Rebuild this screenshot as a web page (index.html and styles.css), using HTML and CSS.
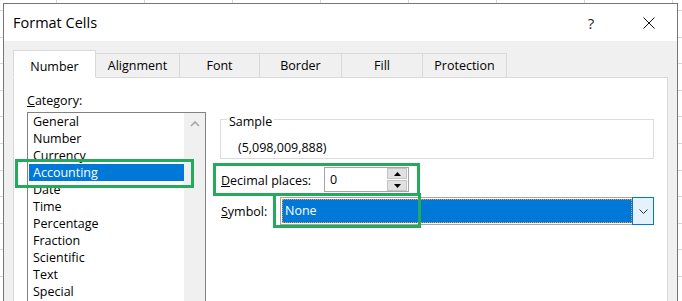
FILE: index.html
```html
<!DOCTYPE html>
<html>
	<head>
		<meta charset="UTF-8">
		<title>Format Cells</title>
		<link rel="stylesheet" href="styles.css">
	</head>
	<body>
		<div class="dialog">
			<div class="titlebar">
				<span class="title">Format Cells</span>
				<span class="help">?</span>
				<span class="close">
					<svg width="12" height="12" viewBox="0 0 12 12"><path d="M0.5 0.5L11.5 11.5M11.5 0.5L0.5 11.5" stroke="#111" stroke-width="1" fill="none"/></svg>
				</span>
			</div>
			<div class="frame">
				<ul class="tabs">
					<li class="tab active w83">Number</li>
					<li class="tab w85">Alignment</li>
					<li class="tab w81">Font</li>
					<li class="tab w83">Border</li>
					<li class="tab w82">Fill</li>
					<li class="tab w85">Protection</li>
				</ul>
				<div class="panel">
					<div class="category">
						<div class="label"><u>C</u>ategory:</div>
						<div class="listbox">
							<ul class="items">
								<li>General</li>
								<li>Number</li>
								<li>Currency</li>
								<li class="selected">Accounting</li>
								<li>Date</li>
								<li>Time</li>
								<li>Percentage</li>
								<li>Fraction</li>
								<li>Scientific</li>
								<li>Text</li>
								<li>Special</li>
							</ul>
							<div class="scrollbar">
								<svg width="10" height="6" viewBox="0 0 10 6"><path d="M1 5L5 1L9 5" stroke="#a6a6a6" stroke-width="1.6" fill="none"/></svg>
							</div>
						</div>
					</div>
					<div class="settings">
						<div class="sample">
							<span class="legend">Sample</span>
							<div class="sample-value">(5,098,009,888)</div>
						</div>
						<div class="row decimals">
							<span class="row-label decimals-label"><u>D</u>ecimal places:</span>
							<div class="spin">
								<span class="spin-value">0</span>
								<div class="spin-btns">
									<span class="spin-btn"><svg width="7" height="4" viewBox="0 0 7 4"><path d="M0 4L3.5 0L7 4Z" fill="#000"/></svg></span>
									<span class="spin-btn"><svg width="7" height="4" viewBox="0 0 7 4"><path d="M0 0L3.5 4L7 0Z" fill="#000"/></svg></span>
								</div>
							</div>
						</div>
						<div class="row symbol">
							<span class="row-label symbol-label"><u>S</u>ymbol:</span>
							<div class="combo">
								<div class="combo-field"><div class="combo-value">None</div></div>
								<div class="combo-btn">
									<svg width="9" height="5" viewBox="0 0 9 5"><path d="M0.5 0.5L4.5 4.5L8.5 0.5" stroke="#333" stroke-width="1" fill="none"/></svg>
								</div>
							</div>
						</div>
					</div>
				</div>
			</div>
		</div>
		<!-- annotation boxes -->
		<div class="mark mark-category"></div>
		<div class="mark mark-decimals"></div>
		<div class="mark mark-symbol"></div>
	</body>
</html>
```

FILE: styles.css
```css
html, body{
	margin: 0;
	height: 301px;
	overflow: hidden;
}
body{
	position: relative;
	font-family: "Open Sans", "Noto Sans", sans-serif;
	font-size: 12.5px;
	color: #000;
	background-color: #fff;
	background-image:
		repeating-linear-gradient(to right, transparent 0 56px, #d6d6d6 56px 57px, transparent 57px 88px),
		repeating-linear-gradient(to bottom, transparent 0 10px, #d6d6d6 10px 11px, transparent 11px 26.6px);
}
ul{
	margin: 0;
	padding: 0;
	list-style: none;
}
.dialog{
	margin: 3px 0 0 3px;
	width: 673px;
	height: 320px;
	border: 1px solid #767676;
	background: #f0f0f0;
}
.titlebar{
	display: flex;
	align-items: center;
	height: 37px;
	padding: 0 22px 0 9px;
	background: #fff;
}
.title{
	font-size: 14.5px;
}
.help{
	margin-left: auto;
	margin-right: 46px;
	width: 12px;
	text-align: center;
	font-size: 15px;
	color: #222;
}
.close{
	display: flex;
	width: 12px;
	height: 12px;
	margin-top: 1px;
}
.frame{
	padding: 9px 9px 0 9px;
}
.tabs{
	display: flex;
	align-items: flex-end;
	height: 28px;
	margin-bottom: -1px;
	position: relative;
	z-index: 1;
}
.tab{
	box-sizing: border-box;
	height: 25px;
	line-height: 24px;
	text-align: center;
	border: 1px solid #d9d9d9;
	margin-left: -1px;
	background: #f0f0f0;
}
.tab:first-child{
	margin-left: 0;
}
.tab.active{
	height: 28px;
	padding-top: 3px;
	line-height: 25px;
	background: #fff;
	border-bottom-color: #fff;
	position: relative;
	z-index: 2;
}
.w81{ width: 81px; }
.w82{ width: 82px; }
.w83{ width: 83px; }
.w85{ width: 85px; }
.panel{
	display: flex;
	height: 260px;
	padding-left: 13px;
	background: #fff;
	border: 1px solid #d9d9d9;
}
.category{
	width: 179px;
	padding-top: 14px;
}
.label{
	height: 17px;
	line-height: 17px;
}
.listbox{
	display: flex;
	margin-top: 3px;
	height: 220px;
	border: 1px solid #828282;
}
.items{
	flex: 1;
	padding-left: 1px;
}
.items li{
	height: 17px;
	line-height: 17px;
	padding-left: 4px;
	white-space: nowrap;
}
.items li.selected{
	background: #0078d7;
	color: #fff;
}
.scrollbar{
	width: 21px;
	background: #f0f0f0;
	display: flex;
	justify-content: center;
	padding-top: 8px;
	box-sizing: border-box;
}
.settings{
	margin-left: 14px;
	width: 435px;
	padding-top: 41px;
}
.sample{
	width: 434px;
	box-sizing: border-box;
	border: 1px solid #dcdcdc;
	padding-bottom: 2px;
}
.legend{
	display: block;
	width: max-content;
	margin: -7px 0 0 6px;
	padding: 0 2px;
	line-height: 17px;
	background: #fff;
}
.sample-value{
	margin: 9px 0 0 17px;
	line-height: 17px;
}
.row{
	display: flex;
	align-items: center;
}
.row-label{
	padding-left: 1px;
	padding-top: 1px;
	box-sizing: border-box;
}
.decimals{
	margin-top: 8px;
}
.decimals-label{
	width: 104px;
}
.spin{
	display: flex;
	align-items: center;
	box-sizing: border-box;
	width: 85px;
	height: 25px;
	border: 1px solid #a6a6a6;
	padding: 0 1px 0 5px;
}
.spin-value{
	flex: 1;
	line-height: 17px;
}
.spin-btns{
	display: flex;
	flex-direction: column;
	gap: 1px;
	width: 20px;
}
.spin-btn{
	display: flex;
	align-items: center;
	justify-content: center;
	background: #e1e1e1;
	border: 1px solid #c4c4c4;
	box-sizing: border-box;
	height: 11px;
}
.symbol{
	margin-top: 5px;
}
.symbol-label{
	width: 60px;
}
.combo{
	display: flex;
	width: 374px;
	height: 28px;
}
.combo-field{
	flex: 1;
	box-sizing: border-box;
	border: 1px solid #a6a6a6;
	border-right: none;
	padding: 1px 0 1px 1px;
}
.combo-value{
	box-sizing: border-box;
	height: 100%;
	background: #0078d7;
	color: #fff;
	border: 1px dotted #f09a3a;
	padding-left: 2px;
	line-height: 22px;
}
.combo-btn{
	width: 22px;
	box-sizing: border-box;
	border: 1px solid #0078d7;
	background: #e5f1fb;
	display: flex;
	align-items: center;
	justify-content: center;
}
.mark{
	position: absolute;
	box-sizing: border-box;
	border: 3px solid #25aa5c;
}
.mark-category{
	left: 15px;
	top: 159px;
	width: 179px;
	height: 29px;
}
.mark-decimals{
	left: 213px;
	top: 163px;
	width: 207px;
	height: 33px;
}
.mark-symbol{
	left: 273px;
	top: 193px;
	width: 148px;
	height: 35px;
}
```
